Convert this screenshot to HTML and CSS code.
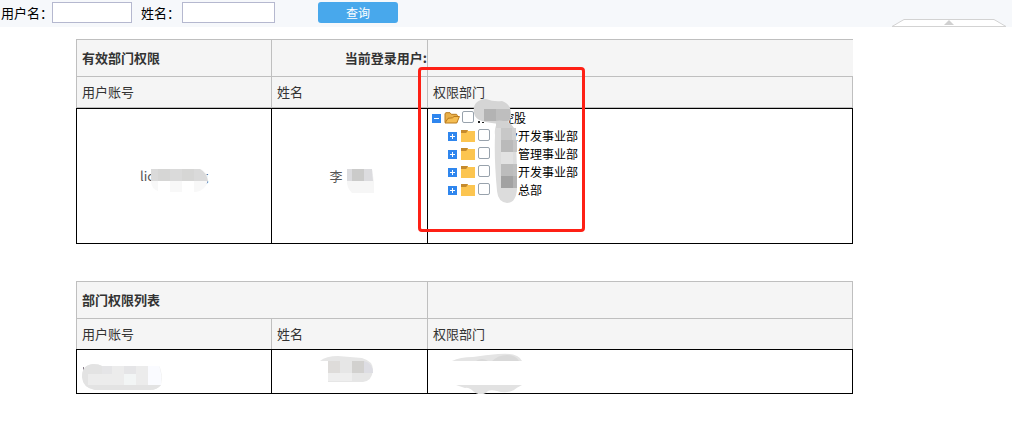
FILE: index.html
```html
<!DOCTYPE html>
<html lang="zh-CN">
<head>
  <meta charset="UTF-8">
  <title>部门权限</title>
  <link rel="stylesheet" href="styles.css">
</head>
<body>

  <svg width="0" height="0" class="defs">
    <symbol id="icon-minus" viewBox="0 0 9 9">
      <rect width="9" height="9" fill="#2f86ee"/>
      <rect x="2" y="4" width="5" height="1" fill="#fff"/>
    </symbol>
    <symbol id="icon-plus" viewBox="0 0 9 9">
      <rect width="9" height="9" fill="#2f86ee"/>
      <rect x="2" y="4" width="5" height="1" fill="#fff"/>
      <rect x="4" y="2" width="1" height="5" fill="#fff"/>
    </symbol>
    <symbol id="icon-open" viewBox="0 0 16 12">
      <path d="M1 10.5V1.5L2 .7H6L7.3 2.3H12.5L13.3 3.2V5" fill="#e9b04a" stroke="#b97a1c"/>
      <path d="M1 11L4 6.3L8.5 5.8L10 4.5H15.4L12.8 11Z" fill="#f5bd52" stroke="#b97a1c"/>
    </symbol>
    <symbol id="icon-folder" viewBox="0 0 14 12">
      <path d="M0 0H6L7 1H14V12H0Z" fill="#fcc550"/>
      <path d="M0 0H7L6 2L5 3H0Z" fill="#c58a2c"/>
    </symbol>
  </svg>

  <form class="search" onsubmit="return false">
    <label for="username">用户名：</label>
    <input type="text" id="username" class="input-user">
    <label for="realname" class="label-name">姓名：</label>
    <input type="text" id="realname" class="input-name">
    <button type="submit" class="query">查询</button>
    <button type="button" class="collapse" aria-label="收起">
      <svg width="114" height="8" viewBox="0 0 114 8">
        <path d="M0 7.5L12 .5H102L114 7.5Z" fill="#fff" stroke="#d3d3d3"/>
        <path d="M57 1L62 6H52Z" fill="#d0d0d0"/>
      </svg>
    </button>
  </form>

  <div class="content">
    <table class="current">
      <colgroup><col class="col-user"><col class="col-name"><col></colgroup>
      <thead>
        <tr class="title">
          <th>有效部门权限</th>
          <th class="login">当前登录用户:</th>
          <th></th>
        </tr>
        <tr class="head">
          <th>用户账号</th>
          <th>姓名</th>
          <th>权限部门</th>
        </tr>
      </thead>
      <tbody>
        <tr>
          <td class="center">
            <span class="masked mask-user"><span>lic</span><span>g</span>
              <svg class="smudge" width="68" height="26">
                <path d="M11 5H61Q68 9 68 16Q66 26 56 28H20Q11 25 11 17Z" fill="#f8f8f8"/>
                <path d="M11 5H60Q67 9 68 17H11Z" fill="#dadada"/>
                <path d="M18 17H30V29H18ZM42 17H54V28H42Z" fill="#fff"/>
                <path d="M18 5H30V17H18ZM42 5H54V17H42Z" fill="#d6d6d5"/>
              </svg>
            </span>
          </td>
          <td class="center">
            <span class="masked mask-name"><span>李</span>
              <svg class="smudge" width="44" height="26">
                <path d="M17 5H42L44 17V29H22Q16 23 17 15Z" fill="#f6f6f6"/>
                <path d="M17 5H42L43 17H17Z" fill="#dcdcdf"/>
                <path d="M22 5H34V17H22Z" fill="#cbcbca"/>
              </svg>
            </span>
          </td>
          <td class="tree-cell">
            <ul class="tree">
              <li>
                <div class="node">
                  <button type="button" class="toggle" aria-label="收起"><svg width="9" height="9"><use href="#icon-minus"/></svg></button>
                  <svg class="folder" width="16" height="12"><use href="#icon-open"/></svg>
                  <input type="checkbox" id="dept-0">
                  <label for="dept-0" class="hide-two">控股</label>
                </div>
                <ul>
                  <li class="node">
                    <button type="button" class="toggle" aria-label="展开"><svg width="9" height="9"><use href="#icon-plus"/></svg></button>
                    <svg class="folder" width="14" height="12"><use href="#icon-folder"/></svg>
                    <input type="checkbox" id="dept-1">
                    <label for="dept-1" class="hide-one">业开发事业部</label>
                  </li>
                  <li class="node">
                    <button type="button" class="toggle" aria-label="展开"><svg width="9" height="9"><use href="#icon-plus"/></svg></button>
                    <svg class="folder" width="14" height="12"><use href="#icon-folder"/></svg>
                    <input type="checkbox" id="dept-2">
                    <label for="dept-2" class="hide-two">管理事业部</label>
                  </li>
                  <li class="node">
                    <button type="button" class="toggle" aria-label="展开"><svg width="9" height="9"><use href="#icon-plus"/></svg></button>
                    <svg class="folder" width="14" height="12"><use href="#icon-folder"/></svg>
                    <input type="checkbox" id="dept-3">
                    <label for="dept-3" class="hide-two">开发事业部</label>
                  </li>
                  <li class="node">
                    <button type="button" class="toggle" aria-label="展开"><svg width="9" height="9"><use href="#icon-plus"/></svg></button>
                    <svg class="folder" width="14" height="12"><use href="#icon-folder"/></svg>
                    <input type="checkbox" id="dept-4">
                    <label for="dept-4" class="hide-two">总部</label>
                  </li>
                </ul>
              </li>
            </ul>
            <svg class="smudge" width="120" height="100">
              <path d="M50 12h2v2h-2zM54 13h2v1h-2z" fill="#222"/>
              <path d="M46 4Q44 -9 58 -10Q66 -7 74 -8Q83 -5 83 5Q83 15 74 15Q60 14 54 12Q47 10 46 4Z" fill="#d5d5d5"/>
              <path d="M56 0H82V10Q80 13 76 12H56Z" fill="#bebebe"/>
              <path d="M56 0H68V12H56Z" fill="#b3b3b3"/>
              <path d="M68 12Q82 10 86 22Q89 28 89 80Q88 94 79 94Q70 93 69 82Q66 50 67 26Q66 18 70 13Z" fill="#dcdcdc"/>
              <path d="M68 12Q82 10 86 19H68Z" fill="#d2d2d2"/>
              <rect x="73" y="19" width="11" height="12" fill="#c8c8c8"/>
              <rect x="84" y="19" width="4" height="12" fill="#d0d0d0"/>
              <rect x="73" y="31" width="12" height="12" fill="#bababa"/>
              <rect x="85" y="31" width="4" height="12" fill="#c6c6c6"/>
              <rect x="73" y="43" width="12" height="12" fill="#e2e2e2"/>
              <rect x="73" y="55" width="12" height="12" fill="#bcbcbc"/>
              <rect x="85" y="55" width="4" height="12" fill="#c0c0c0"/>
              <rect x="73" y="67" width="12" height="12" fill="#a2a2a2"/>
              <rect x="85" y="67" width="4" height="12" fill="#b3b3b3"/>
            </svg>
            <div class="highlight"></div>
          </td>
        </tr>
      </tbody>
    </table>

    <table class="list">
      <colgroup><col class="col-user"><col class="col-name"><col></colgroup>
      <thead>
        <tr class="title">
          <th colspan="2">部门权限列表</th>
          <th></th>
        </tr>
        <tr class="head">
          <th>用户账号</th>
          <th>姓名</th>
          <th>权限部门</th>
        </tr>
      </thead>
      <tbody>
        <tr>
          <td>
            <svg class="smudge" width="90" height="44">
              <path d="M6 17h1v4h-1zM8 17h1v3h-1z" fill="#8a7f8c"/>
              <path d="M5 27Q5 15 16 14Q22 14 25 16H82Q86 22 84 35Q80 40 73 40H18Q6 38 5 27Z" fill="#ececec"/>
              <path d="M5 27Q5 15 16 14Q22 14 25 16V24H11V35H84Q80 40 73 40H18Q6 38 5 27Z" fill="#e3e3e3"/>
              <path d="M25 16H35V24H25ZM47 16H59V24H47Z" fill="#e5e5e7"/>
              <path d="M47 24H59V35H47Z" fill="#f2f5f5"/>
              <path d="M71 16H82Q85 22 84 35H71Z" fill="#fafbff"/>
            </svg>
          </td>
          <td>
            <svg class="smudge" width="110" height="44">
              <path d="M48 11Q54 6 66 6L90 8Q101 11 101 20Q100 31 91 32H56V11Z" fill="#e6e6e6"/>
              <path d="M56 11H68V23H56Z" fill="#dedcda"/>
              <path d="M80 11H92V23H80Z" fill="#d2d1cf"/>
              <path d="M92 11Q101 13 101 23H92Z" fill="#dddde3"/>
              <path d="M56 23H80V31H56Z" fill="#eee"/>
            </svg>
          </td>
          <td>
            <svg class="smudge" width="110" height="50">
              <path d="M24 11Q32 7 45 7Q58 5 70 4Q90 2 94 11Z" fill="#e4e4e4"/>
              <path d="M64 11Q70 5 79 5Q88 5 91 11ZM48 11Q54 7 60 11Z" fill="#d9d9d9"/>
              <path d="M28 35H94Q88 38 86 40Q78 44 69 41Q60 39 58 43Q52 46 46 42Q41 37 37 38Z" fill="#e2e2e2"/>
            </svg>
          </td>
        </tr>
      </tbody>
    </table>
  </div>

</body>
</html>
```

FILE: styles.css
```css
* {
  box-sizing: border-box;
}

body {
  margin: 0;
  background: #fff;
  color: #000;
  font-family: "Noto Sans CJK SC", "Open Sans", sans-serif;
  font-size: 13px;
  line-height: 20px;
}

.defs {
  position: absolute;
}

button {
  border: 0;
  padding: 0;
  font-family: inherit;
  cursor: pointer;
}

/* search bar */
.search {
  display: flex;
  align-items: center;
  height: 27px;
  padding: 0 6px 2px 1px;
  background: #f6f8fb;
}

.search label {
  width: 51px;
  white-space: nowrap;
}

.search .label-name {
  width: 41px;
  margin-left: 9px;
}

.search input {
  height: 21px;
  border: 1px solid #b5b8cf;
  background: #fff;
}

.input-user {
  width: 80px;
}

.input-name {
  width: 93px;
}

.query {
  width: 80px;
  height: 21px;
  margin-left: 43px;
  border-radius: 3px;
  background: #48a8ec;
  color: #fff;
  font-size: 12px;
  line-height: 20px;
}

.collapse {
  align-self: flex-end;
  height: 8px;
  margin: 0 0 -2px auto;
  background: none;
}

.collapse svg {
  display: block;
}

/* tables */
.content {
  margin: 12px 159px 0 76px;
}

table {
  width: 100%;
  table-layout: fixed;
  border-collapse: separate;
  border-spacing: 0;
}

.col-user {
  width: 195px;
}

.col-name {
  width: 156px;
}

th {
  padding: 0 5px;
  border-top: 1px solid #bfbfbf;
  border-left: 1px solid #bfbfbf;
  background: #f5f5f5;
  color: #333;
  text-align: left;
}

th:last-child {
  border-right: 1px solid #bfbfbf;
}

.title th {
  height: 37px;
}

.title .login {
  padding-right: 0;
  text-align: right;
}

.head th {
  height: 31px;
  font-weight: normal;
}

.current .title th:last-child {
  border-right: 0;
}

.current .head th {
  height: 32px;
  border-bottom: 1px solid #bfbfbf;
}

td {
  position: relative;
  height: 45px;
  padding: 0;
  border: 1px solid #000;
  border-right: 0;
  color: #555;
}

td:last-child {
  border-right: 1px solid #000;
}

.current td {
  height: 136px;
}

.list {
  margin-top: 37px;
}

.center {
  text-align: center;
}

.smudge {
  position: absolute;
  top: 0;
  left: 0;
  overflow: visible;
  pointer-events: none;
}

.masked {
  position: relative;
  display: inline-flex;
  justify-content: space-between;
  height: 20px;
}

.mask-user {
  width: 68px;
}

.mask-name {
  width: 40px;
}

.masked .smudge {
  top: -2px;
}

/* department tree */
.tree-cell {
  vertical-align: top;
}

.tree,
.tree ul {
  margin: 0;
  padding: 0;
  list-style: none;
}

.tree {
  padding-left: 4px;
  color: #000;
  font-size: 12px;
}

.tree ul {
  padding-left: 16px;
}

.node {
  display: flex;
  align-items: center;
  height: 18px;
  line-height: 18px;
}

.toggle {
  width: 9px;
  height: 9px;
  margin-right: 3px;
}

.toggle svg {
  display: block;
}

.folder {
  width: 16px;
}

.node input {
  appearance: none;
  width: 12px;
  height: 12px;
  margin: 0 4px 2px 2px;
  border: 1px solid #98a2ac;
  border-radius: 2px;
  background: #fff;
}

.node input:checked {
  background: #2f86ee;
}

.hide-one {
  padding-left: 12px;
}

.hide-two {
  padding-left: 24px;
}

.highlight {
  position: absolute;
  top: -42px;
  left: -10px;
  width: 167px;
  height: 165px;
  border: 3px solid #fe2015;
  border-radius: 4px;
  pointer-events: none;
}
```
